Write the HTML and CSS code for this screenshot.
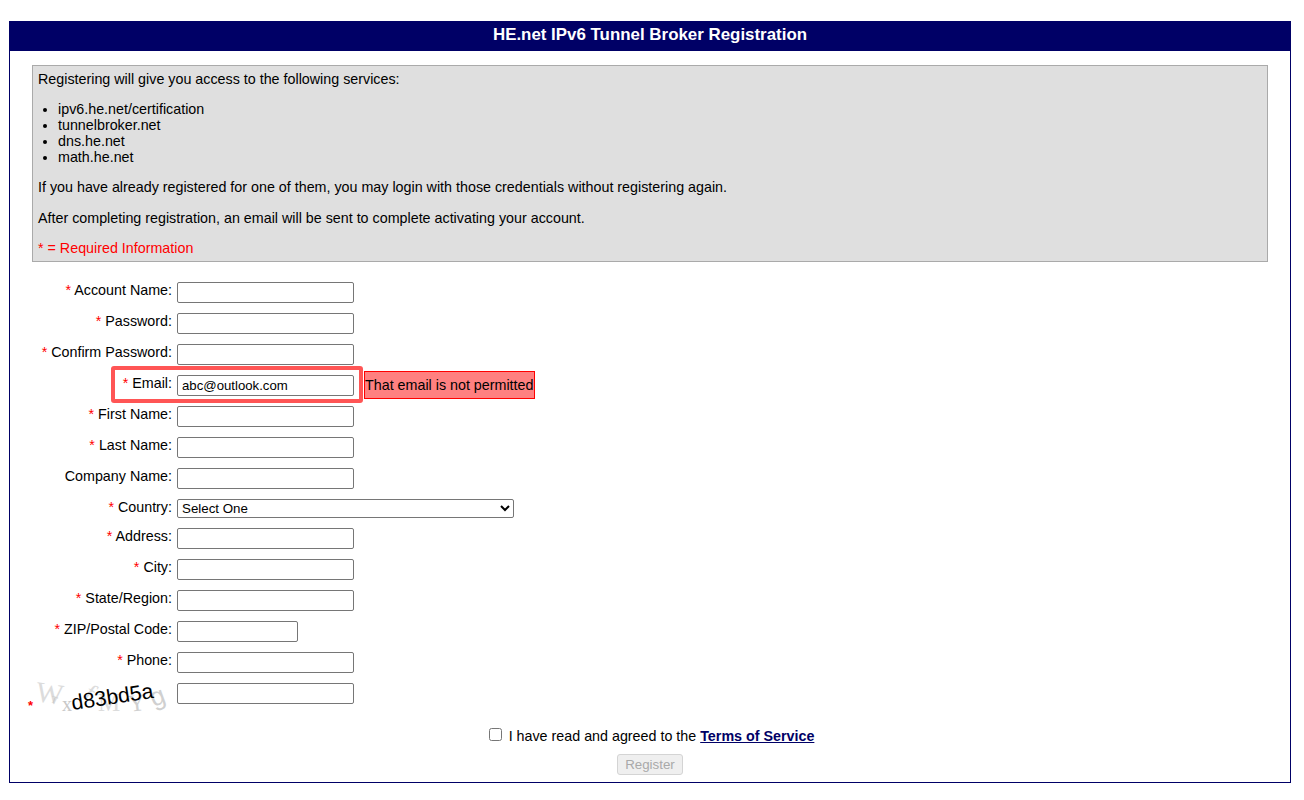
FILE: index.html
```html
<!DOCTYPE html>
<html lang="en">
<head>
<meta charset="utf-8">
<title>HE.net IPv6 Tunnel Broker Registration</title>
<link rel="stylesheet" href="styles.css">
</head>
<body>
<main class="panel">
  <h1 class="panel-title">HE.net IPv6 Tunnel Broker Registration</h1>
  <section class="notice">
    <p>Registering will give you access to the following services:</p>
    <ul>
      <li>ipv6.he.net/certification</li>
      <li>tunnelbroker.net</li>
      <li>dns.he.net</li>
      <li>math.he.net</li>
    </ul>
    <p>If you have already registered for one of them, you may login with those credentials without registering again.</p>
    <p class="after">After completing registration, an email will be sent to complete activating your account.</p>
    <p class="required-note">* = Required Information</p>
  </section>
  <form class="form">
    <div class="row"><label class="label"><span class="star">*</span> Account Name:</label><input class="field" type="text"></div>
    <div class="row"><label class="label"><span class="star">*</span> Password:</label><input class="field" type="password"></div>
    <div class="row"><label class="label"><span class="star">*</span> Confirm Password:</label><input class="field" type="password"></div>
    <div class="row row-highlight"><label class="label"><span class="star">*</span> Email:</label><input class="field" type="text" value="abc@outlook.com"><span class="error">That email is not permitted</span><span class="highlight"></span></div>
    <div class="row"><label class="label"><span class="star">*</span> First Name:</label><input class="field" type="text"></div>
    <div class="row"><label class="label"><span class="star">*</span> Last Name:</label><input class="field" type="text"></div>
    <div class="row"><label class="label">Company Name:</label><input class="field" type="text"></div>
    <div class="row"><label class="label"><span class="star">*</span> Country:</label><select class="select"><option>Select One</option></select></div>
    <div class="row"><label class="label"><span class="star">*</span> Address:</label><input class="field" type="text"></div>
    <div class="row"><label class="label"><span class="star">*</span> City:</label><input class="field" type="text"></div>
    <div class="row"><label class="label"><span class="star">*</span> State/Region:</label><input class="field" type="text"></div>
    <div class="row"><label class="label"><span class="star">*</span> ZIP/Postal Code:</label><input class="field field-zip" type="text"></div>
    <div class="row"><label class="label"><span class="star">*</span> Phone:</label><input class="field" type="text"></div>
    <div class="row row-captcha">
      <div class="captcha-cell">
        <span class="star captcha-star">*</span>
        <div class="captcha">
          <span class="noise n1">W</span><span class="noise n2">T</span><span class="noise n3">x</span><span class="noise n4">f</span><span class="noise n5">M</span><span class="noise n6">Y</span><span class="noise n7">g</span>
          <span class="captcha-code">d83bd5a</span>
        </div>
      </div>
      <input class="field" type="text">
    </div>
    <div class="terms"><input class="check" type="checkbox"><span>I have read and agreed to the <a class="terms-link" href="#">Terms of Service</a></span></div>
    <div class="actions"><button class="register" type="button" disabled>Register</button></div>
  </form>
</main>
</body>
</html>
```
FILE: styles.css
```css
* { box-sizing: border-box; }
html, body { margin: 0; padding: 0; background: #fff; }
body {
  padding: 21px 13px 0 9px;
  font-family: "Liberation Sans", Arial, sans-serif;
  font-size: 14.3px;
  line-height: 16px;
  color: #000;
}
.panel {
  height: 762px;
  border: 1px solid #000066;
  overflow: hidden;
}
.panel-title {
  margin: 0;
  height: 29px;
  background: #000066;
  color: #fff;
  font-size: 16.9px;
  line-height: 25px;
  font-weight: bold;
  text-align: center;
}
.notice {
  margin: 14px 22px 0;
  padding: 5px;
  border: 1px solid #aaaaaa;
  background: #dfdfdf;
}
.notice p { margin: 0; }
.notice ul { margin: 14px 0; padding: 0 0 0 20px; }
.notice .after { margin-top: 15px; }
.notice .required-note { margin-top: 14px; color: #ff0000; }
.form {
  margin-top: 20px;
  display: flex;
  flex-direction: column;
  gap: 10px;
}
.row {
  display: flex;
  align-items: flex-start;
  position: relative;
}
.label {
  width: 162px;
  margin-right: 5px;
  text-align: right;
  flex: none;
}
.star { color: #ff0000; }
.field {
  width: 177px;
  height: 21px;
  padding: 1px 4px;
  border: 1px solid #767676;
  border-radius: 2px;
  background: #fff;
  font-family: "Liberation Sans", Arial, sans-serif;
  font-size: 13.2px;
  color: #000;
  flex: none;
}
.field-zip { width: 121px; }
.select {
  width: 337px;
  height: 19px;
  padding: 0;
  border: 1px solid #767676;
  border-radius: 2px;
  background: #fff;
  font-family: "Liberation Sans", Arial, sans-serif;
  font-size: 13.33px;
  color: #000;
}
.error {
  margin: -4px 0 -3px 10px;
  height: 28px;
  padding: 0 1px 0 0;
  border: 1px solid #ff0000;
  background: #ff8080;
  line-height: 26px;
  white-space: nowrap;
}
.highlight {
  position: absolute;
  left: 101px;
  top: -9px;
  width: 252px;
  height: 37px;
  border: 4px solid #ff5555;
  border-radius: 3px;
  pointer-events: none;
}
.captcha-cell {
  width: 162px;
  margin-right: 5px;
  height: 32px;
  flex: none;
  position: relative;
}
.captcha-star {
  position: absolute;
  left: 18px;
  top: 15px;
  font-size: 13px;
  font-weight: bold;
}
.captcha {
  position: absolute;
  left: 28px;
  top: 0;
  width: 134px;
  height: 32px;
}
.noise {
  position: absolute;
  color: #dcdcdc;
  font-family: "Liberation Serif", serif;
  line-height: 1;
}
.n1 { left: -2px; top: -4px; font-size: 29px; transform: rotate(8deg); }
.n2 { left: 13px; top: 12px; font-size: 10px; transform: rotate(20deg); color: #c8c8c8; }
.n3 { left: 24px; top: 11px; font-size: 20px; color: #c8c8c8; }
.n4 { left: 48px; top: -3px; font-size: 25px; transform: rotate(35deg); }
.n5 { left: 60px; top: 7px; font-size: 25px; }
.n6 { left: 90px; top: 8px; font-size: 24px; transform: rotate(-6deg); color: #d0d0d0; }
.n7 { left: 112px; top: 0; font-size: 26px; font-family: "Liberation Sans", sans-serif; transform: rotate(-20deg); color: #d0d0d0; }
.captcha-code {
  position: absolute;
  left: 33px;
  top: 2px;
  font-size: 21.2px;
  line-height: 24px;
  color: #000;
  transform: rotate(-8.5deg);
  white-space: nowrap;
}
.terms {
  margin-top: 3px;
  padding-left: 3px;
  display: flex;
  justify-content: center;
  align-items: flex-start;
}
.check {
  width: 13px;
  height: 13px;
  margin: 0 7px 0 0;
}
.terms-link {
  color: #000066;
  font-weight: bold;
}
.actions {
  display: flex;
  justify-content: center;
}
.register {
  width: 66px;
  height: 21px;
  padding: 0;
  border: 1px solid #d4d4d4;
  border-radius: 3px;
  background: #efefef;
  color: #a9a9a9;
  font-family: "Liberation Sans", Arial, sans-serif;
  font-size: 13.33px;
}
```
